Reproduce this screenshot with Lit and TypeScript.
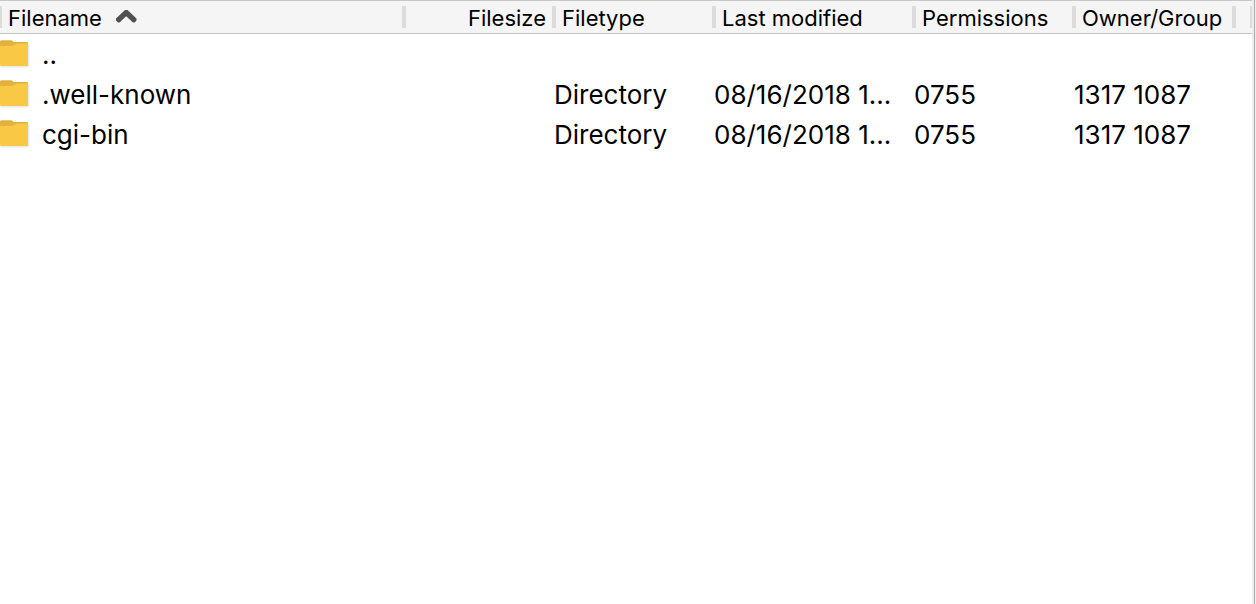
import { LitElement, html, css, svg } from "lit";
import { customElement, state } from "lit/decorators.js";

interface Entry {
  name: string;
  type: string;
  modified: string;
  permissions: string;
  owner: string;
}

const ENTRIES: Entry[] = [
  { name: "..", type: "", modified: "", permissions: "", owner: "" },
  { name: ".well-known", type: "Directory", modified: "08/16/2018 1...", permissions: "0755", owner: "1317 1087" },
  { name: "cgi-bin", type: "Directory", modified: "08/16/2018 1...", permissions: "0755", owner: "1317 1087" },
];

const COLUMNS = [
  { key: "name", label: "Filename" },
  { key: "size", label: "Filesize" },
  { key: "type", label: "Filetype" },
  { key: "modified", label: "Last modified" },
  { key: "permissions", label: "Permissions" },
  { key: "owner", label: "Owner/Group" },
];

const folder = html`<svg class="folder" viewBox="0 0 30 28" aria-hidden="true">
  ${svg`
    <path d="M0 4H28Q29.5 4 29.5 6V26Q29.5 27.5 28 27.5H0Z" fill="#ececec"/>
    <path d="M0 1Q0.5 0.3 1.5 0.3H11Q12 0.3 13 1.3L14 2H27Q28 2 28 3V12H0Z" fill="#e3b23c"/>
    <path d="M0 6H11Q12.5 6 13.5 5.2L15 4Q15.8 3.5 17 3.5H27Q28 3.5 28 4.5V25Q28 26 27 26H1L0 25Z" fill="#f9c844"/>
  `}
</svg>`;

@customElement("app-root")
export class AppRoot extends LitElement {
  @state() private descending = false;

  static styles = css`
    :host {
      display: block;
      background: #fff;
      color: #000;
      font-family: Inter, "Liberation Sans", sans-serif;
    }
    .pane {
      display: flex;
      min-height: 100vh;
    }
    .list {
      flex: 1;
      min-width: 0;
    }
    .edge {
      width: 1px;
      border-left: 2px solid #ececec;
      border-right: 1px solid #ececec;
      background: #b0b0b0;
    }
    .files {
      width: 100%;
      table-layout: fixed;
      border-collapse: separate;
      border-spacing: 0;
    }
    .col-name { width: 402px; }
    .col-size { width: 150px; }
    .col-type { width: 160px; }
    .col-modified { width: 200px; }
    .col-permissions { width: 160px; }
    .col-owner { width: 160px; }
    .head {
      padding: 5px 0;
      background: #f5f5f5;
      border-top: 1px solid #c8c8c8;
      border-bottom: 1px solid #c8c8c8;
    }
    .sort {
      display: flex;
      align-items: center;
      gap: 14px;
      box-sizing: border-box;
      width: 100%;
      height: 22px;
      margin: 0;
      padding: 2px 6px 0 6px;
      border: 0;
      border-left: 4px solid #dcdcdc;
      background: none;
      color: inherit;
      font: 22px/22px Inter, "Liberation Sans", sans-serif;
      white-space: nowrap;
    }
    .sort-name { border-left-width: 2px; }
    .sort-size { justify-content: flex-end; }
    .arrow {
      width: 22px;
      height: 18px;
    }
    .arrow-down { transform: rotate(180deg); }
    .filler {
      height: 22px;
      border-left: 4px solid #dcdcdc;
      border-right: 2px solid #dcdcdc;
    }
    .cell {
      height: 38px;
      padding: 2px 0 0 2px;
      font-size: 26px;
      line-height: 38px;
      white-space: nowrap;
      overflow: hidden;
      text-overflow: ellipsis;
    }
    .cell-name {
      height: 40px;
      padding: 0;
    }
    .entry {
      display: flex;
      align-items: center;
      gap: 12px;
      height: 40px;
    }
    .label { padding-top: 2px; }
    .folder {
      width: 30px;
      height: 28px;
      flex: none;
    }
  `;

  private toggle(key: string) {
    if (key === "name") this.descending = !this.descending;
  }

  render() {
    const [parent, ...rest] = ENTRIES;
    const rows = [parent, ...(this.descending ? rest.reverse() : rest)];
    return html`<main class="pane">
      <div class="list">
        <table class="files">
          <colgroup>
            ${COLUMNS.map((c) => html`<col class="col-${c.key}" />`)}
            <col />
          </colgroup>
          <thead>
            <tr>
              ${COLUMNS.map(
                (c) => html`<th class="head" scope="col">
                  <button class="sort sort-${c.key}" type="button" @click=${() => this.toggle(c.key)}>
                    ${c.label}${c.key === "name"
                      ? html`<svg class="arrow ${this.descending ? "arrow-down" : ""}" viewBox="0 0 22 18" aria-hidden="true">
                          <path d="M9 1H11.5L20.5 9.5V11.5L18.5 13.5H17L10.2 7.2L3.5 13.5H2L0 11.5V9.5Z" fill="#505050" />
                        </svg>`
                      : ""}
                  </button>
                </th>`
              )}
              <td class="head"><div class="filler"></div></td>
            </tr>
          </thead>
          <tbody>
            ${rows.map(
              (e) => html`<tr>
                <td class="cell cell-name"><div class="entry">${folder}<span class="label">${e.name}</span></div></td>
                <td class="cell"></td>
                <td class="cell">${e.type}</td>
                <td class="cell">${e.modified}</td>
                <td class="cell">${e.permissions}</td>
                <td class="cell">${e.owner}</td>
                <td class="cell"></td>
              </tr>`
            )}
          </tbody>
        </table>
      </div>
      <div class="edge"></div>
    </main>`;
  }
}
